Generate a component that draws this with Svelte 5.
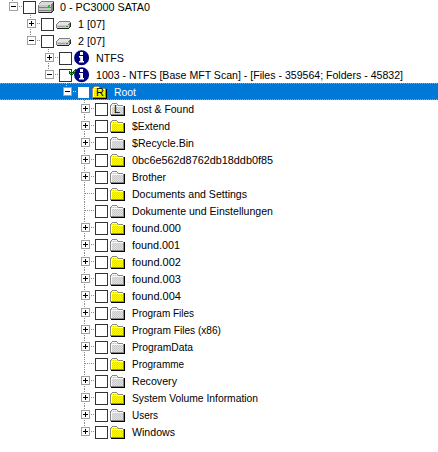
<script>
  const names = [
    ['Lost & Found', 'L'], ['$Extend'], ['$Recycle.Bin'], ['0bc6e562d8762db18ddb0f85'], ['Brother'],
    ['Documents and Settings', '', true], ['Dokumente und Einstellungen', '', true],
    ['found.000'], ['found.001'], ['found.002'], ['found.003'], ['found.004'],
    ['Program Files'], ['Program Files (x86)'], ['ProgramData'], ['Programme', '', true],
    ['Recovery'], ['System Volume Information'], ['Users'], ['Windows']
  ];
  const rows = [
    { level: 0, icon: 'port', label: '0 - PC3000 SATA0', w: 90, open: true, up: true },
    { level: 1, icon: 'disk', label: '1 [07]', w: 27, up: true, down: true },
    { level: 1, icon: 'disk', label: '2 [07]', w: 27, open: true, up: true },
    { level: 2, icon: 'info', label: 'NTFS', w: 28, up: true, down: true },
    { level: 2, icon: 'info', label: '1003 - NTFS [Base MFT Scan] - [Files - 359564; Folders - 45832]', w: 307, open: true, up: true, mark: true },
    { level: 3, icon: 'folder', letter: 'R', label: 'Root', w: 22, open: true, up: true, selected: true },
    ...names.map(([label, letter, leaf], i) => ({
      level: 4, icon: 'folder', label, letter, leaf, up: true, down: i < names.length - 1,
      w: [62, 38, 62, 141, 34, 115, 141, 49, 48, 49, 49, 49, 62, 89, 61, 52, 45, 126, 26, 43][i]
    }))
  ];
</script>

<div class="tree">
  {#each rows as r}
    <div class="row" class:selected={r.selected} style="padding-left:{9 + r.level * 18}px">
      <svg class="node" width="14" height="17" shape-rendering="crispEdges">
        {#if r.up}<path class="dots" d="M3.5 0V{r.leaf ? 8 : 4}" />{/if}
        {#if r.down}<path class="dots" d="M3.5 {r.leaf ? 8 : 14}V17" />{/if}
        <path class="dots" d="M{r.leaf ? 4 : 10} 8.5H14" />
        {#if !r.leaf}
          <rect x=".5" y="4.5" width="8" height="8" fill="#fff" stroke="#a0a0a0" />
          <path d="M2 8.5H7" stroke="#000" />
          {#if !r.open}<path d="M4.5 6V11" stroke="#000" />{/if}
        {/if}
      </svg>
      <span class="check">
        {#if r.mark}
          <svg class="mark" width="8" height="7" shape-rendering="crispEdges">
            <path d="M0 2h1v3h-1zM1 3h1v3h-1zM2 4h1v3h-1zM3 3h1v3h-1zM4 2h1v3h-1zM5 1h1v3h-1zM6 0h1v3h-1z" fill="#006000" />
            <path d="M1 4h1v1h-1zM3 4h1v1h-1zM5 2h1v1h-1z" fill="#30d030" />
          </svg>
        {/if}
      </span>
      <svg class="icon" width="17" height="17">
        {#if r.icon === 'folder'}
          <defs>
            <pattern id="weave" width="2" height="2" patternUnits="userSpaceOnUse">
              <rect width="2" height="2" fill="#ff0" />
              <path d="M0 0h1v1h-1zM1 1h1v1h-1z" fill="#c8c8c8" />
            </pattern>
          </defs>
          <g shape-rendering="crispEdges">
            <path d="M1 5h1v-1h5v1h1v1h5v9H1z" fill="url(#weave)" />
            <path d="M2 3h5v1h-5zM1 4h1v1h-1zM7 4h1v1h-1zM8 5h5v1h-5zM0 5h1v10h-1zM13 6h1v9h-1zM1 14h12v1h-12z" fill="#888" />
            <path d="M2 4h5v1h-5zM1 6h12v1h-12zM1 7h1v7h-1z" fill="#fff" opacity=".85" />
            <path d="M14 6h1v10H1v-1h13z" fill="#000" />
          </g>
          {#if r.letter}<text class="letter" x="4" y="13">{r.letter}</text>{/if}
        {:else if r.icon === 'info'}
          <circle cx="7.6" cy="8.7" r="7.5" fill="#000080" />
          <path d="M6 3h3v3h-3zM5 7h4v5h1v1.5H5V12h1.2V8.4H5z" fill="#fff" />
        {:else if r.icon === 'port'}
          <g shape-rendering="crispEdges">
            <path d="M3 3h13v10h-1v1h-1v1H0V7h1V5h1V4h1z" fill="#808080" />
            <path d="M3 4h12v1h-1v1h-1v1H1V6h1V5h1z" fill="#dcdcdc" />
            <path d="M1 7h12v2H1zM1 10h12v2H1zM1 13h12v1H1z" fill="#c6c6c6" />
            <path d="M1 14h13v1H1zM15 4h1v9h-1zM14 13h1v1h-1z" fill="#222" />
            <path d="M10 7h2v2h-2z" fill="#00e000" />
          </g>
        {:else}
          <g shape-rendering="crispEdges">
            <path d="M3 6h11v1h1v5h-1v1h-1v1H1v-1H0V9h1V8h1V7h1z" fill="#808080" />
            <path d="M3 7h11v1h-1v1h-1v1H1V9h1V8h1z" fill="#e4e4e4" />
            <path d="M1 10h12v3H1z" fill="#cacaca" />
            <path d="M2 11h7v1H2z" fill="#a4a4a4" />
            <path d="M1 13h12v1H1zM14 8h1v4h-1zM13 12h1v1h-1z" fill="#222" />
            <path d="M10 11h2v1h-2z" fill="#20a020" />
          </g>
        {/if}
      </svg>
      <svg class="label" width={r.w + 6} height="17">
        <text x="0" y="13" textLength={r.w} lengthAdjust="spacingAndGlyphs">{r.label}</text>
      </svg>
    </div>
  {/each}
</div>

<style>
  :global(body) { background: #fff; }
  .tree {
    width: 438px;
    height: 452px;
    box-sizing: border-box;
    overflow: hidden;
    background: #fff;
    font: 11.6px "Liberation Sans", Arial, sans-serif;
  }
  .row {
    display: flex;
    align-items: flex-start;
    height: 17px;
    box-sizing: border-box;
    color: #000;
  }
  .row:first-child { margin-top: -2px; }
  svg { display: block; flex: none; }
  .dots { stroke: #8c8c8c; stroke-dasharray: 1 1; fill: none; }
  .check {
    position: relative;
    flex: none;
    width: 13px;
    height: 13px;
    margin-top: 3px;
    box-sizing: border-box;
    border: 1px solid #333;
    background: #fff;
  }
  .mark { position: absolute; left: 9px; top: -1px; }
  .icon { margin-left: 2px; }
  .label { margin-left: 5px; overflow: visible; }
  text { fill: currentColor; }
  .letter { fill: #000; font-size: 11px; }
  .selected {
    color: #fff;
    background:
      repeating-linear-gradient(90deg, #ff8728 0 1px, #0078d7 1px 2px) top / 100% 1px no-repeat,
      repeating-linear-gradient(90deg, #ff8728 0 1px, #0078d7 1px 2px) bottom / 100% 1px no-repeat,
      #0078d7;
  }
  .selected .check { border-color: #0078d7; }
  .selected .dots { stroke: #d0e4f5; }
</style>
